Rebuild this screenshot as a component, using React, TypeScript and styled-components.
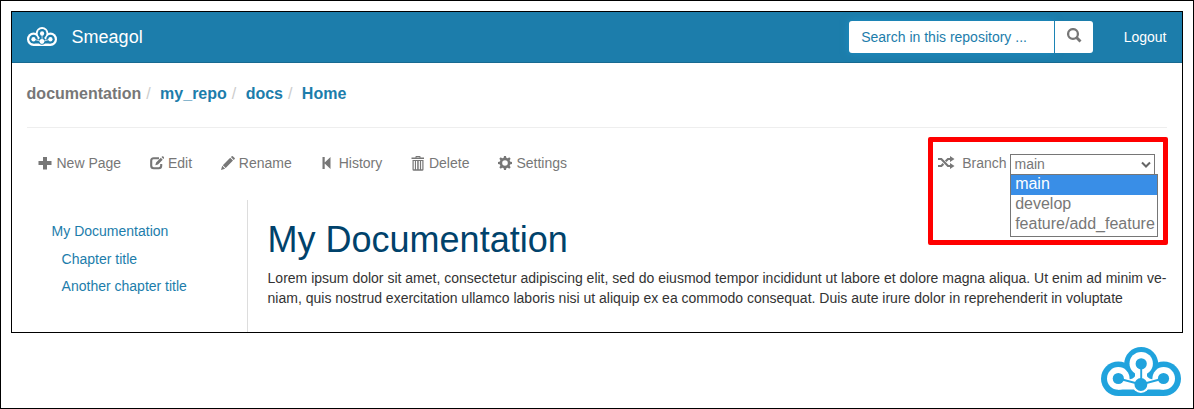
import React from "react";
import styled, { createGlobalStyle } from "styled-components";

const Global = createGlobalStyle`
  * { box-sizing: border-box; }
  body { margin: 0; background: #fff; font: 14px/20px "Liberation Sans", Arial, sans-serif; color: #333; }
`;
const Page = styled.div`
  width: 1194px; height: 409px; border: 1px solid #000; padding: 10px;
  display: flex; flex-direction: column;
`;
const Frame = styled.div`
  height: 322px; border: 1px solid #000; display: flex; flex-direction: column; flex: none;
`;
const Navbar = styled.header`
  height: 51px; flex: none; display: flex; align-items: flex-start;
  background: #1c7dab; border-bottom: 1px solid #186a91; padding: 0 15.5px 0 14px; color: #fff;
`;
const Brand = styled.div`
  display: flex; flex: 1; font-size: 18px; line-height: 20px; padding-top: 15px; gap: 14.6px;
  svg { margin: 0 0 0 1px; }
`;
const SearchGroup = styled.div`
  display: flex; margin-top: 9px; height: 32px;
`;
const SearchField = styled.div`
  width: 205px; height: 32px; background: #fff; color: #1c7dab; padding: 6px 12px;
  border-radius: 3px 0 0 3px; box-shadow: 0 0 8px rgba(30, 150, 205, 0.7);
`;
const SearchButton = styled.div`
  width: 38px; margin-left: 1px; background: #fff; border-radius: 0 3px 3px 0; padding: 7px 0 0 12px; color: #777;
  position: relative;
`;
const Logout = styled.div`
  margin: 15px 0 0 30.5px;
`;
const Content = styled.main`
  flex: 1; padding: 0 15px 0 14.6px; display: flex; flex-direction: column; min-height: 0;
`;
const Crumbs = styled.nav`
  height: 65px; flex: none; padding-top: 20px; border-bottom: 1px solid #eee;
  display: flex; font-size: 16px; line-height: 22px; font-weight: bold; color: #1c7dab;
`;
const Crumb = styled.span<{ $muted?: boolean }>`
  color: ${(p) => (p.$muted ? "#777" : "#1c7dab")};
`;
const Slash = styled.span`
  color: #ccc; font-weight: normal; padding: 0 9.4px 0 5px;
`;
const Toolbar = styled.div`
  height: 72px; flex: none; display: flex; align-items: flex-start; padding: 25px 12.5px 0 11.9px; color: #777;
`;
const Action = styled.div<{ $width: number }>`
  width: ${(p) => p.$width}px; display: flex; gap: 4px; white-space: nowrap;
  svg { margin-top: 3px; flex: none; }
`;
const Branch = styled.div`
  margin-left: auto; display: flex; position: relative;
  svg { flex: none; }
`;
const Highlight = styled.div`
  position: absolute; left: -10px; top: -16px; width: 240px; height: 108px;
  border: 5px solid #f00; border-radius: 2px;
`;
const BranchLabel = styled.span`
  margin: 0 3px 0 7px;
`;
const Select = styled.div`
  width: 145px; height: 21px; margin-top: 1px; border: 1px solid #767676; padding: 0 3px 0 4px; line-height: 19px;
  display: flex; justify-content: space-between;
`;
const Options = styled.div`
  position: absolute; left: 72px; top: 21px; width: 148px; height: 63px; border: 1px solid #767676; background: #fff;
`;
const Option = styled.div<{ $selected?: boolean }>`
  height: 20px; padding-left: 4px; font-size: 16px; line-height: 18px; white-space: nowrap;
  color: ${(p) => (p.$selected ? "#fff" : "#777")};
  background: ${(p) => (p.$selected ? "#398ee7" : "#fff")};
`;
const Columns = styled.div`
  flex: 1; display: flex;
`;
const Sidebar = styled.aside`
  width: 221.400px; border-right: 1px solid #ddd; padding: 21px 0 0 25px; color: #1c7dab;
`;
const TocItem = styled.div<{ $nested?: boolean }>`
  padding-left: ${(p) => (p.$nested ? 10 : 0)}px; margin-bottom: 7.5px;
`;
const Article = styled.article`
  flex: 1; padding: 20px 0 0 19.6px; white-space: nowrap;
`;
const Title = styled.h1`
  margin: 0 0 8px; font-size: 36px; line-height: 40px; font-weight: normal; color: #00426b;
`;
const Text = styled.p`
  margin: 0;
`;
const Footer = styled.footer`
  display: flex; justify-content: flex-end; padding: 14px 2px 0 0;
`;

const CloudLogo = ({ width, height, color, back }: { width: number; height: number; color: string; back: string }) => (
  <svg width={width} height={height} viewBox="0 0 80 49" preserveAspectRatio="none">
    <g fill={color}>
      <circle cx="40.2" cy="17" r="17" />
      <circle cx="17.3" cy="31.7" r="17.3" />
      <circle cx="62.7" cy="31.7" r="17.3" />
      <path d="M17.3 49V20H62.7V49Z" />
    </g>
    <g fill={back}>
      <circle cx="17.3" cy="31.4" r="11.3" />
      <circle cx="62.7" cy="31.4" r="11.3" />
      <circle cx="40.2" cy="16.600" r="11.700" />
      <path d="M17 34H63V42.600H17ZM34 24H46V38H34Z" />
      <path d="M34 25Q35.500 29.500 31.500 31.500Q28 33 26 31V38H54.400V31Q52 33 48.500 31.500Q44.500 29.500 46 25Z" />
      <circle cx="39.900" cy="37.500" r="8.500" />
    </g>
    <g fill={color}>
      <circle cx="17.3" cy="31.5" r="5.600" />
      <circle cx="62.5" cy="31.5" r="5.600" />
      <circle cx="40.2" cy="16.800" r="5.600" />
      <circle cx="39.900" cy="37.500" r="6.400" />
    </g>
    <path d="M17.3 31.500L40 37.500L62.400 31.500M40.2 17V37.500" fill="none" stroke={color} strokeWidth="1.900" />
  </svg>
);

const shapes = {
  plus: <path d="M5 1h4v4h4.5v4H9v4.5H5V9H.5V5H5z" />,
  edit: (
    <>
      <path d="M9 2.3H3.7Q1.2 2.3 1.2 4.8v5q0 2.5 2.5 2.5h5q2.5 0 2.5-2.5V8" fill="none" stroke="currentColor" strokeWidth="2.1" />
      <path d="M5.3 9.3l.8-2.8L10.8 1.8l1.9 1.9L8 8.4zM11.5 1.1l.8-.8q.4-.3.8 0l1 1q.4.4 0 .8l-.8.9z" />
    </>
  ),
  pencil: <path d="M0 14l1.2-4.2 2.9 2.9zM1.8 9.2l7.4-7.4L12 4.6 4.7 12zM9.9 1.1L10.8.3q.5-.4 1 0L13.7 2q.4.5 0 1l-1 .9z" />,
  back: <path d="M1.500 1h2.200v5.600L9.500 1v12L3.700 7.500V13H1.500z" />,
  trash: (
    <path fillRule="evenodd" d="M4.500 1.500V.6Q4.500 0 5.200 0h3.600Q9.500 0 9.500.6V1.500H13v1.500H.5V1.500zM5.500 1v.5h3V1zM1.500 4h11v9.500q0 1.300-1.300 1.300H2.800Q1.500 14.800 1.500 13.500zM2.700 4.900v8.400h1.200V4.900zM5 4.900v8.400h1.200V4.900zM7.700 4.900v8.400h1.200V4.900zM10.100 4.900v8.400h1.200V4.900z" />
  ),
  gear: (
    <>
      <circle cx="7" cy="7" r="4.1" fill="none" stroke="currentColor" strokeWidth="2.6" />
      {[0, 45, 90, 135, 180, 225, 270, 315].map((a) => (
        <path key={a} d="M5.600 2.500L6 0h2l.4 2.500z" transform={`rotate(${a} 7 7)`} />
      ))}
    </>
  ),
  search: (
    <g fill="none" stroke="currentColor">
      <circle cx="6" cy="6" r="4.900" strokeWidth="2.300" />
      <path d="M9.300 9.300l4.200 4.200" strokeWidth="2.900" />
    </g>
  ),
  shuffle: (
    <>
      <path d="M0 3h3.300L10 10h3M0 10h3.300L5.400 7.900M7.700 5.300L10 3h3" fill="none" stroke="currentColor" strokeWidth="2.200" />
      <path d="M12 0l4.500 3L12 6zM12 7l4.500 3L12 13z" />
    </>
  ),
};
type IconProps = { name: keyof typeof shapes; w?: number; h?: number };
const Icon = ({ name, w = 14, h = 14 }: IconProps) => (
  <svg width={w} height={h} viewBox={`0 0 ${w} ${h}`} fill="currentColor">
    {shapes[name]}
  </svg>
);
const ShuffleIcon = styled.svg`
  margin-top: 3px;
`;

const actions: { icon: keyof typeof shapes; label: string; width: number }[] = [
  { icon: "plus", label: "New Page", width: 111.5 },
  { icon: "edit", label: "Edit", width: 70.8 },
  { icon: "pencil", label: "Rename", width: 99.9 },
  { icon: "back", label: "History", width: 90.3 },
  { icon: "trash", label: "Delete", width: 87.5 },
  { icon: "gear", label: "Settings", width: 80 },
];

export default function App() {
  return (
    <Page>
      <Global />
      <Frame>
        <Navbar>
          <Brand>
            <CloudLogo width={30} height={19} color="#fff" back="#1c7dab" />
            Smeagol
          </Brand>
          <SearchGroup>
            <SearchField>Search in this repository ...</SearchField>
            <SearchButton><Icon name="search" w={15} h={15} /></SearchButton>
          </SearchGroup>
          <Logout>Logout</Logout>
        </Navbar>
        <Content>
          <Crumbs>
            <Crumb $muted>documentation</Crumb><Slash>/</Slash>
            <Crumb>my_repo</Crumb><Slash>/</Slash>
            <Crumb>docs</Crumb><Slash>/</Slash>
            <Crumb>Home</Crumb>
          </Crumbs>
          <Toolbar>
            {actions.map((a) => (
              <Action key={a.icon} $width={a.width}>
                <Icon name={a.icon} h={15} />
                {a.label}
              </Action>
            ))}
            <Branch>
              <Highlight />
              <ShuffleIcon width="17" height="13" viewBox="0 0 17 13" fill="currentColor">{shapes.shuffle}</ShuffleIcon>
              <BranchLabel>Branch</BranchLabel>
              <Select>
                main
                <svg width="10" height="19" viewBox="0 0 10 19"><path d="M1 7.500l4 4 4-4" fill="none" stroke="#666" strokeWidth="2" /></svg>
              </Select>
              <Options>
                <Option $selected>main</Option>
                <Option>develop</Option>
                <Option>feature/add_feature</Option>
              </Options>
            </Branch>
          </Toolbar>
          <Columns>
            <Sidebar>
              <TocItem>My Documentation</TocItem>
              <TocItem $nested>Chapter title</TocItem>
              <TocItem $nested>Another chapter title</TocItem>
            </Sidebar>
            <Article>
              <Title>My Documentation</Title>
              <Text>
                Lorem ipsum dolor sit amet, consectetur adipiscing elit, sed do eiusmod tempor incididunt ut labore et dolore magna aliqua. Ut enim ad minim ve-
                <br />
                niam, quis nostrud exercitation ullamco laboris nisi ut aliquip ex ea commodo consequat. Duis aute irure dolor in reprehenderit in voluptate
              </Text>
            </Article>
          </Columns>
        </Content>
      </Frame>
      <Footer>
        <CloudLogo width={80} height={49} color="#20a3dd" back="#fff" />
      </Footer>
    </Page>
  );
}
